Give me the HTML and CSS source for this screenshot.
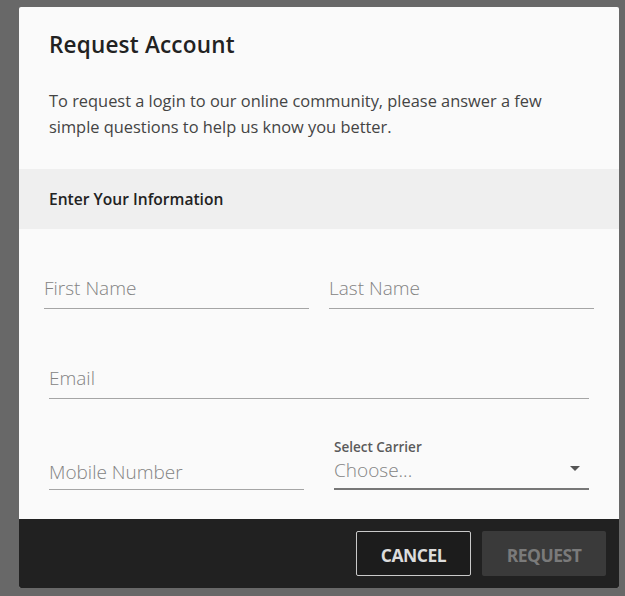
FILE: index.html
```html
<!DOCTYPE html>
<html>
<head>
<meta charset="utf-8">
<link rel="stylesheet" href="styles.css">
</head>
<body>
<div class="modal">
  <div class="head">
    <h1 class="title">Request Account</h1>
    <p class="intro">To request a login to our online community, please answer a few simple questions to help us know you better.</p>
  </div>
  <div class="band">Enter Your Information</div>
  <div class="form">
    <div class="row row-names">
      <div class="field"><span class="ph">First Name</span></div>
      <div class="field"><span class="ph">Last Name</span></div>
    </div>
    <div class="row row-email">
      <div class="field"><span class="ph">Email</span></div>
    </div>
    <div class="row row-mobile">
      <div class="field mobile"><span class="ph">Mobile Number</span></div>
      <div class="field select">
        <span class="label">Select Carrier</span>
        <span class="ph">Choose...</span>
        <span class="caret"></span>
      </div>
    </div>
  </div>
  <div class="foot">
    <button class="btn cancel">CANCEL</button>
    <button class="btn request">REQUEST</button>
  </div>
</div>
</body>
</html>
```
FILE: styles.css
```css
html, body {
  margin: 0;
  padding: 0;
  background: #686868;
  width: 625px;
  height: 596px;
  overflow: hidden;
  font-family: "Open Sans", "Liberation Sans", sans-serif;
}
.modal {
  margin: 7px 0 0 19px;
  width: 600px;
  height: 581px;
  background: #fafafa;
  border-radius: 2px;
  overflow: hidden;
  display: flex;
  flex-direction: column;
}
.head {
  padding: 25px 30px 0 30px;
  height: 162px;
  box-sizing: border-box;
}
.title {
  margin: 0;
  font-size: 22.5px;
  font-weight: 600;
  color: #222;
  line-height: 26px;
  letter-spacing: 0.2px;
}
.intro {
  margin: 30px 0 0 0;
  font-size: 16.4px;
  line-height: 26px;
  color: #444;
  width: 510px;
}
.band {
  height: 60px;
  background: #efefef;
  padding-left: 30px;
  display: flex;
  align-items: center;
  font-size: 15.6px;
  font-weight: 600;
  color: #222;
}
.form {
  flex: 1;
}
.row {
  display: flex;
}
.field {
  border-bottom: 1.5px solid #a5a5a5;
  position: relative;
  padding-bottom: 6px;
  display: flex;
  flex-direction: column;
}
.ph {
  font-size: 19px;
  line-height: 28px;
  color: #838383;
  font-weight: 300;
}
.row-names {
  padding: 45px 0 0 25px;
  gap: 20px;
}
.row-names .field {
  width: 265px;
}
.row-email {
  padding: 55px 0 0 30px;
}
.row-email .field {
  width: 540px;
}
.row-mobile {
  padding: 57px 0 0 30px;
  gap: 30px;
  align-items: flex-end;
}
.field.mobile {
  width: 255px;
  padding-bottom: 3px;
}
.field.select {
  width: 255px;
  padding-bottom: 4px;
  border-bottom: 2px solid #777;
}
.label {
  font-size: 13.5px;
  font-weight: 600;
  color: #5a5a5a;
  line-height: 18px;
  margin-top: -18px;
}
.caret {
  position: absolute;
  right: 9px;
  bottom: 17px;
  width: 0;
  height: 0;
  border-left: 5px solid transparent;
  border-right: 5px solid transparent;
  border-top: 5px solid #555;
}
.foot {
  height: 69px;
  background: #212121;
  display: flex;
  justify-content: flex-end;
  align-items: flex-start;
  padding: 12px 13px 0 0;
  box-sizing: border-box;
  gap: 11px;
}
.btn {
  height: 45px;
  padding: 3px 0 0 0;
  font-family: inherit;
  font-size: 17.5px;
  font-weight: 700;
  letter-spacing: -0.5px;
  border-radius: 2px;
}
.cancel {
  width: 115px;
  background: #1c1c1c;
  border: 1px solid #c9c9c9;
  color: #dcdcdc;
}
.request {
  width: 124px;
  background: #3a3a3a;
  border: none;
  color: #7a7a7a;
}
```
